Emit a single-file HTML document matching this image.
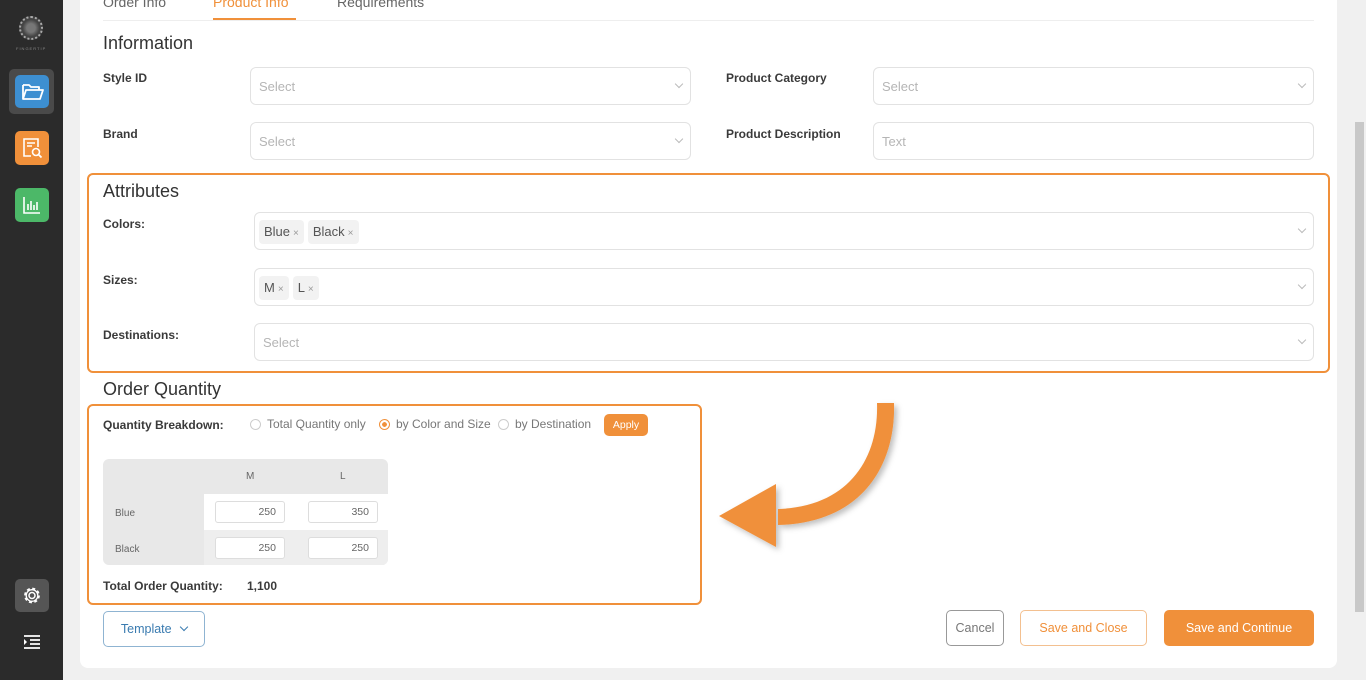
<!DOCTYPE html>
<html><head><meta charset="utf-8"><style>
*{box-sizing:border-box;margin:0;padding:0}
body{width:1366px;height:680px;overflow:hidden;background:#f0f0f0;font-family:"Liberation Sans",sans-serif;color:#333;position:relative}
.a{position:absolute}
.side{left:0;top:0;width:63px;height:680px;background:#2b2b2b}
.card{left:80px;top:-20px;width:1257px;height:688px;background:#fff;border-radius:8px}
.lbl{font-size:12px;font-weight:bold;color:#3a3a3a}
.h{font-size:18px;color:#333}
.inp{border:1px solid #e2e2e2;border-radius:6px;background:#fff}
.ph{position:absolute;left:8px;top:11px;font-size:13px;color:#b5b5b5}
.chev{position:absolute;right:8px;top:13px;width:6px;height:6px;border-right:1px solid #bbb;border-bottom:1px solid #bbb;transform:rotate(45deg)}
.tag{display:inline-block;background:#f2f2f2;border-radius:4px;font-size:13px;color:#555;padding:0 5px;height:24px;line-height:24px;margin-right:4px}
.tag i{font-style:normal;font-size:10px;color:#999;margin-left:3px}
.ob{border:2px solid #f0903a;border-radius:6px}
.radio{width:11px;height:11px;border:1px solid #ccc;border-radius:50%}
.qi{background:#fff;border:1px solid #ddd;border-radius:3px;width:70px;height:22px;font-size:10.5px;color:#666;text-align:right;padding-right:8px;line-height:20px}
.btn{border-radius:5px;font-size:12.5px;text-align:center;line-height:34px;height:36px}
</style></head><body>
<div class="a side">
 <div class="a" style="left:19px;top:16px;width:24px;height:24px;border-radius:50%;border:2px dotted #aaa;background:radial-gradient(circle,#777 30%,#444 60%)"></div>
 <div class="a" style="left:16px;top:46px;font-size:4px;color:#888;letter-spacing:1px">FINGERTIP</div>
 <div class="a" style="left:9px;top:69px;width:45px;height:45px;background:#4a4a4a;border-radius:5px"></div>
 <div class="a" style="left:15px;top:75px;width:34px;height:33px;background:#3d8fd1;border-radius:5px">
  <svg width="34" height="33" viewBox="0 0 34 33"><path d="M8 10h6l2 2h8v3M8 10v14h17l3-9H11l-3 9" fill="none" stroke="#fff" stroke-width="1.8" stroke-linejoin="round"/></svg></div>
 <div class="a" style="left:15px;top:131px;width:34px;height:34px;background:#f0903a;border-radius:5px">
  <svg width="34" height="34" viewBox="0 0 34 34"><path d="M16 25h-7V8h14v8M12 12h8M12 15h5" fill="none" stroke="#fff" stroke-width="1.6"/><circle cx="21" cy="21" r="3.5" fill="none" stroke="#fff" stroke-width="1.6"/><path d="M23.5 23.5l3 3" stroke="#fff" stroke-width="1.8"/></svg></div>
 <div class="a" style="left:15px;top:188px;width:34px;height:34px;background:#4cb868;border-radius:5px">
  <svg width="34" height="34" viewBox="0 0 34 34"><path d="M9 9v16h16M13 22v-6M16 22v-9M19 22v-5M22 22v-8" fill="none" stroke="#fff" stroke-width="1.6"/></svg></div>
 <div class="a" style="left:15px;top:579px;width:34px;height:33px;background:#555;border-radius:5px">
  <svg width="34" height="33" viewBox="0 0 34 33"><circle cx="17" cy="16.5" r="3" fill="none" stroke="#fff" stroke-width="1.5"/><circle cx="17" cy="16.5" r="7" fill="none" stroke="#fff" stroke-width="1.8" stroke-dasharray="3 2.5"/><circle cx="17" cy="16.5" r="5.8" fill="none" stroke="#fff" stroke-width="1.3"/></svg></div>
 <svg class="a" style="left:23px;top:634px" width="18" height="16"><path d="M1 2h16M7 6h10M7 10h10M1 14h16" stroke="#fff" stroke-width="1.8"/><path d="M1 5l3 3-3 3z" fill="#fff"/></svg>
</div>
<div class="a card"></div>
<div class="a" style="left:103px;top:-6px;font-size:14px;color:#666">Order Info</div>
<div class="a" style="left:213px;top:-6px;font-size:14px;color:#f0903a">Product Info</div>
<div class="a" style="left:337px;top:-6px;font-size:14px;color:#666">Requirements</div>
<div class="a" style="left:103px;top:20px;width:1211px;height:1px;background:#eee"></div>
<div class="a" style="left:213px;top:18px;width:83px;height:2px;background:#f0903a"></div>

<div class="a h" style="left:103px;top:33px">Information</div>
<div class="a lbl" style="left:103px;top:71px">Style ID</div>
<div class="a lbl" style="left:103px;top:127px">Brand</div>
<div class="a lbl" style="left:726px;top:71px">Product Category</div>
<div class="a lbl" style="left:726px;top:127px">Product Description</div>
<div class="a inp" style="left:250px;top:67px;width:441px;height:38px"><span class="ph">Select</span><span class="chev"></span></div>
<div class="a inp" style="left:250px;top:122px;width:441px;height:38px"><span class="ph">Select</span><span class="chev"></span></div>
<div class="a inp" style="left:873px;top:67px;width:441px;height:38px"><span class="ph">Select</span><span class="chev"></span></div>
<div class="a inp" style="left:873px;top:122px;width:441px;height:38px"><span class="ph">Text</span></div>

<div class="a ob" style="left:87px;top:173px;width:1243px;height:200px"></div>
<div class="a h" style="left:103px;top:181px">Attributes</div>
<div class="a lbl" style="left:103px;top:217px">Colors:</div>
<div class="a lbl" style="left:103px;top:273px">Sizes:</div>
<div class="a lbl" style="left:103px;top:328px">Destinations:</div>
<div class="a inp" style="left:254px;top:212px;width:1060px;height:38px;padding:7px 0 0 4px"><span class="tag">Blue<i>×</i></span><span class="tag">Black<i>×</i></span><span class="chev"></span></div>
<div class="a inp" style="left:254px;top:268px;width:1060px;height:38px;padding:7px 0 0 4px"><span class="tag">M<i>×</i></span><span class="tag">L<i>×</i></span><span class="chev"></span></div>
<div class="a inp" style="left:254px;top:323px;width:1060px;height:38px"><span class="ph">Select</span><span class="chev"></span></div>

<div class="a h" style="left:103px;top:379px">Order Quantity</div>
<div class="a ob" style="left:87px;top:404px;width:615px;height:201px"></div>
<div class="a lbl" style="left:103px;top:418px">Quantity Breakdown:</div>
<div class="a radio" style="left:250px;top:419px"></div>
<div class="a" style="left:267px;top:417px;font-size:12px;color:#777">Total Quantity only</div>
<div class="a radio" style="left:379px;top:419px;border-color:#f0903a;background:radial-gradient(circle,#f0903a 35%,#fff 40%)"></div>
<div class="a" style="left:396px;top:417px;font-size:12px;color:#777">by Color and Size</div>
<div class="a radio" style="left:498px;top:419px"></div>
<div class="a" style="left:515px;top:417px;font-size:12px;color:#777">by Destination</div>
<div class="a" style="left:604px;top:414px;width:44px;height:22px;background:#f0903a;border-radius:5px;color:#fff;font-size:10.5px;text-align:center;line-height:22px">Apply</div>

<div class="a" style="left:103px;top:459px;width:285px;height:106px;background:#e8e8e8;border-radius:6px;overflow:hidden">
 <div class="a" style="left:101px;top:35px;width:184px;height:36px;background:#fff"></div>
 <div class="a" style="left:101px;top:71px;width:184px;height:35px;background:#eee"></div>
 <div class="a" style="left:143px;top:12px;font-size:10px;color:#666">M</div>
 <div class="a" style="left:237px;top:12px;font-size:10px;color:#666">L</div>
 <div class="a" style="left:12px;top:49px;font-size:10px;color:#666">Blue</div>
 <div class="a" style="left:12px;top:85px;font-size:10px;color:#666">Black</div>
 <div class="a qi" style="left:112px;top:42px">250</div>
 <div class="a qi" style="left:205px;top:42px">350</div>
 <div class="a qi" style="left:112px;top:78px">250</div>
 <div class="a qi" style="left:205px;top:78px">250</div>
</div>
<div class="a lbl" style="left:103px;top:579px">Total Order Quantity:</div>
<div class="a lbl" style="left:247px;top:579px">1,100</div>

<div class="a btn" style="left:103px;top:611px;width:102px;border:1px solid #8fb4d2;color:#3a7bb0">Template <span style="display:inline-block;width:6px;height:6px;border-right:1px solid #3a7bb0;border-bottom:1px solid #3a7bb0;transform:rotate(45deg);margin:0 0 3px 6px"></span></div>
<div class="a btn" style="left:946px;top:610px;width:58px;border:1px solid #999;color:#777">Cancel</div>
<div class="a btn" style="left:1020px;top:610px;width:127px;border:1px solid #f3c090;color:#f0903a">Save and Close</div>
<div class="a btn" style="left:1164px;top:610px;width:150px;background:#f0903a;color:#fff;border:1px solid #f0903a">Save and Continue</div>

<svg class="a" style="left:700px;top:395px" width="220" height="170" viewBox="700 395 220 170">
 <defs><filter id="s"><feDropShadow dx="3" dy="3" stdDeviation="3" flood-color="#000" flood-opacity=".25"/></filter></defs>
 <g filter="url(#s)" fill="#f0903a">
  <path d="M877 403h17c2 60-30 120-116 122v-16c70-2 101-50 99-106z"/>
  <path d="M719 516l57-32v63z"/>
 </g>
</svg>

<div class="a" style="left:1354px;top:0;width:12px;height:680px;background:#f0f0f0"></div>
<div class="a" style="left:1355px;top:122px;width:9px;height:490px;background:#c8c8c8"></div>
</body></html>
